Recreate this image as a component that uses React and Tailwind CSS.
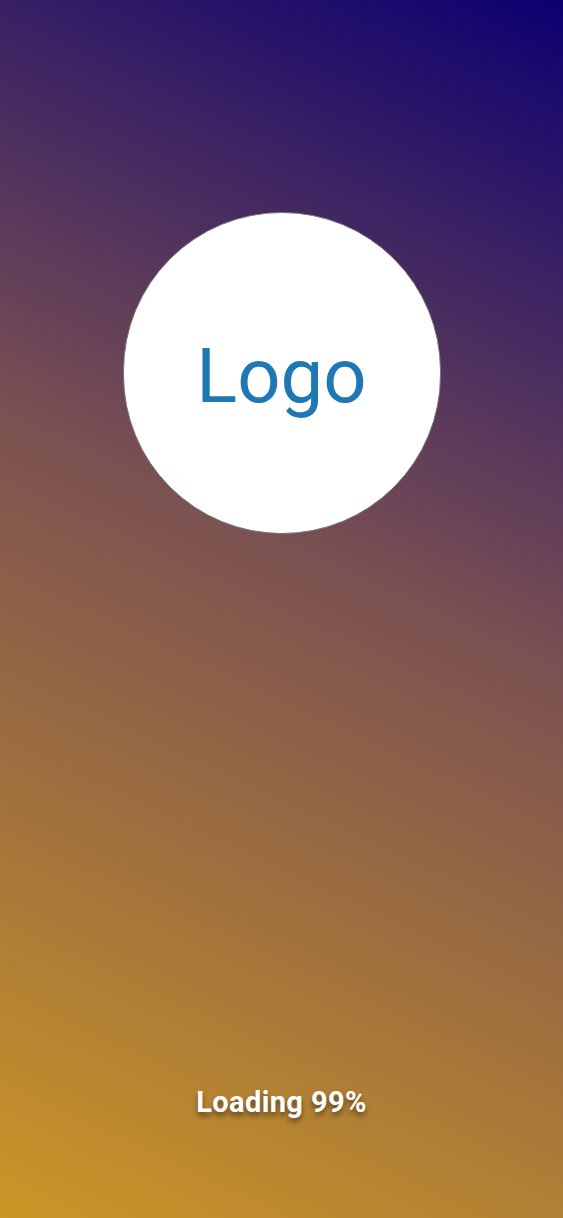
export default function App() {
  return (
    <div className="h-[1218px] w-full flex flex-col items-center bg-[linear-gradient(25deg,#cc9626_0%,#7a5052_55%,#0c0070_100%)] font-['Roboto',sans-serif]">
      {/* logo circle */}
      <div className="mt-[212px] w-[318px] h-[322px] rounded-full bg-white border border-[#777] flex items-center justify-center">
        <span className="text-[#1f77b4] text-[76px] leading-none mt-[6px]">Logo</span>
      </div>

      <div className="flex-1" />

      <p className="mb-[94px] text-white font-bold text-[29px] tracking-[0.4px] [text-shadow:0_4px_5px_rgba(0,0,0,0.45)]">
        Loading 99%
      </p>
    </div>
  );
}
